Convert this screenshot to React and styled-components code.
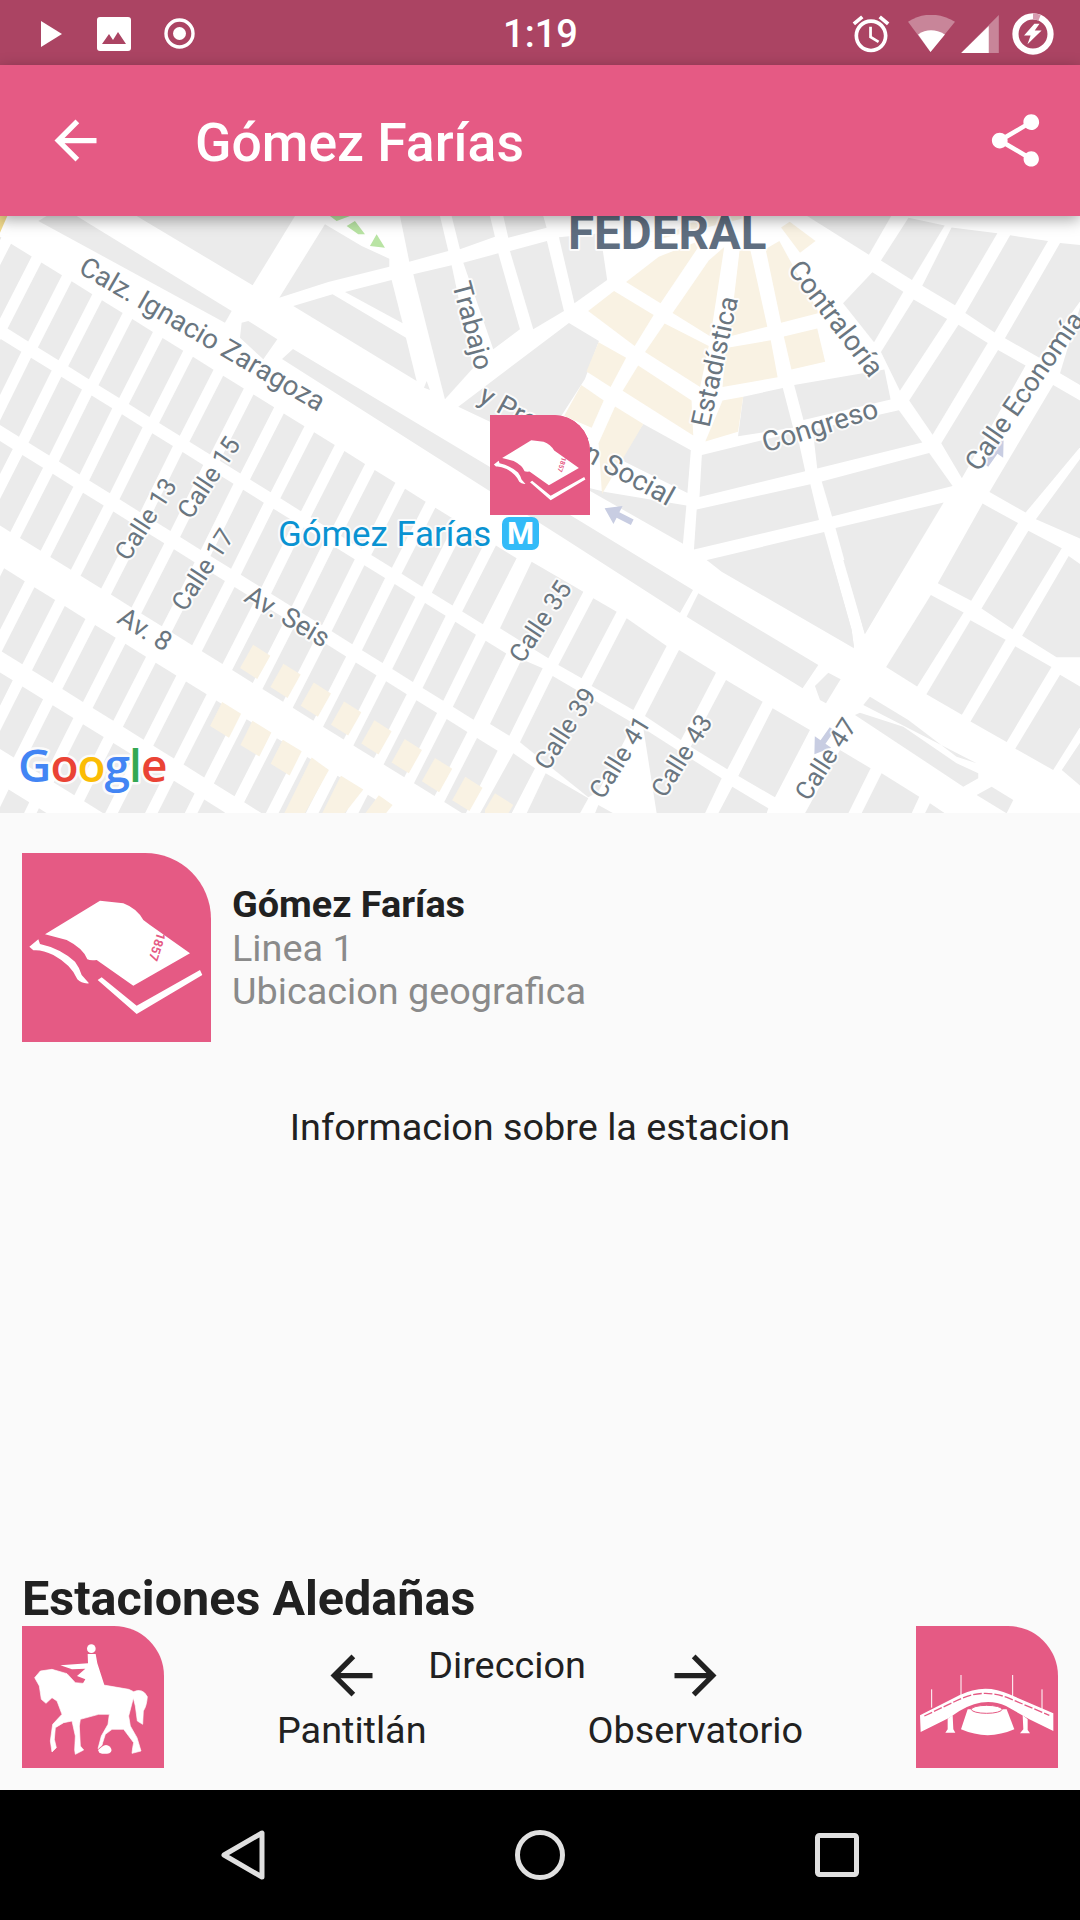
import React from 'react';
import styled, { createGlobalStyle } from 'styled-components';

const Global = createGlobalStyle`
  html, body { margin: 0; padding: 0; background: #fafafa; }
  * { box-sizing: border-box; }
`;
const PINK = '#e55a84';
const Page = styled.div`
  width: 1080px; height: 1920px; display: flex; flex-direction: column;
  font-family: Roboto, "Noto Sans", sans-serif; background: #fafafa; color: #212121; overflow: hidden;
`;
const StatusBar = styled.div`
  height: 65px; flex: none; background: #ab4463; display: grid; grid-template-columns: 1fr auto 1fr; align-items: center; color: #fff;
`;
const StatusLeft = styled.div`display: flex; align-items: center; gap: 33px; padding-left: 41px;`;
const StatusRight = styled.div`display: flex; align-items: center; justify-content: flex-end; padding-right: 26px;`;
const StatusSlot = styled.span`display: block; margin-left: ${p => p.$gap || 0}px;`;
const Clock = styled.div`font-size: 38px; font-weight: 500; line-height: 65px; padding: 2px 0 0 1px;`;
const AppBar = styled.header`
  height: 151px; flex: none; background: ${PINK}; display: flex; align-items: center; padding: 0 33px 0 44px; color: #fff;
  box-shadow: 0 4px 14px rgba(0,0,0,.35); position: relative; z-index: 2;
`;
const Title = styled.h1`flex: 1; margin: 4px 0 0 88px; font-size: 53.5px; font-weight: 500; line-height: 60px;`;
const MapArea = styled.div`height: 597px; flex: none; position: relative; background: #fff; overflow: hidden;`;
const MapSvg = styled.svg`display: block; width: 1080px; height: 597px;`;
const MapLabel = styled.text`
  font-family: Roboto, sans-serif; font-size: ${p => p.$size || 28}px; fill: ${p => p.$color || '#6a7680'};
  font-weight: ${p => p.$weight || 400}; paint-order: stroke; stroke: rgba(255,255,255,.85); stroke-width: 4px; stroke-linejoin: round;
`;
const GoogleMark = styled.text`
  font-family: "Open Sans", sans-serif; font-size: 46px; font-weight: 600; letter-spacing: -1px;
  paint-order: stroke; stroke: rgba(255,255,255,.85); stroke-width: 5px; stroke-linejoin: round;
`;
const Marker = styled.div`
  position: absolute; left: 490px; top: 199px; width: 100px; height: 100px; background: ${PINK}; border-top-right-radius: 36px; overflow: hidden;
`;
const MetroBadge = styled.span`
  position: absolute; left: 502px; top: 301px; width: 37px; height: 33px; border-radius: 7px; background: #33bbf8; color: #fff;
  font-size: 31px; font-weight: 700; line-height: 33px; text-align: center;
`;
const Tile = styled.div`
  flex: none; width: ${p => p.$size}px; height: ${p => p.$size}px; background: ${PINK};
  border-top-right-radius: ${p => Math.round(p.$size * .35)}px; overflow: hidden;
  svg { display: block; width: 100%; height: 100%; }
`;
const Content = styled.main`flex: 1; display: flex; flex-direction: column; padding: 40px 22px 22px; min-height: 0;`;
const InfoRow = styled.section`display: flex; align-items: center; gap: 21px;`;
const InfoText = styled.div`display: flex; flex-direction: column; padding-top: 2px;`;
const InfoName = styled.div`font-size: 37.8px; font-weight: 700; line-height: 43.5px; color: #212121;`;
const InfoSub = styled.div`font-size: 37.8px; line-height: 43.5px; color: #8a8a8a;`;
const Description = styled.p`margin: 64px 0 0; font-size: 37.8px; line-height: 43px; text-align: center;`;
const NearbyTitle = styled.h2`margin: auto 0 0; font-size: 48.5px; font-weight: 700; line-height: 54px; color: #212121;`;
const NearbyRow = styled.div`display: flex; align-items: flex-start;`;
const Directions = styled.div`flex: 1; display: flex; justify-content: center; gap: 1.6px; padding-top: 18px;`;
const DirectionCol = styled.div`display: flex; flex-direction: column; align-items: center;`;
const DirectionLabel = styled.div`font-size: 37.8px; line-height: 43px; margin-top: ${p => p.$top || 0}px; white-space: nowrap;`;
const NavBar = styled.nav`
  height: 130px; flex: none; background: #000; display: flex; align-items: center; justify-content: center; gap: 250px;
`;

const ArrowBack = ({ size = 63, color = '#fff' }) => (
  <svg width={size} height={size} viewBox="0 0 24 24" fill={color} style={{ display: 'block', flex: 'none' }}>
    <path d="M20 11H7.83l5.59-5.59L12 4l-8 8 8 8 1.41-1.41L7.83 13H20v-2z" />
  </svg>
);
const ArrowForward = ({ size = 63, color = '#212121' }) => (
  <svg width={size} height={size} viewBox="0 0 24 24" fill={color} style={{ display: 'block', flex: 'none' }}>
    <path d="M12 4l-1.41 1.41L16.17 11H4v2h12.17l-5.58 5.59L12 20l8-8z" />
  </svg>
);
const ShareIcon = () => (
  <svg width="63" height="63" viewBox="0 0 24 24" fill="#fff" style={{ display: 'block' }}>
    <path d="M18 16.08c-.76 0-1.44.3-1.96.77L8.91 12.7c.05-.23.09-.46.09-.7s-.04-.47-.09-.7l7.05-4.11c.54.5 1.25.81 2.04.81 1.66 0 3-1.34 3-3s-1.34-3-3-3-3 1.34-3 3c0 .24.04.47.09.7L8.04 9.81C7.5 9.31 6.79 9 6 9c-1.66 0-3 1.34-3 3s1.34 3 3 3c.79 0 1.5-.31 2.04-.81l7.12 4.16c-.05.21-.08.43-.08.65 0 1.61 1.31 2.92 2.92 2.92 1.61 0 2.92-1.31 2.92-2.92s-1.31-2.92-2.92-2.92z" />
  </svg>
);
const PlayIcon = () => <svg width="23" height="26" viewBox="0 0 23 26"><path d="M0 0l21 13L0 26z" fill="#fff" /></svg>;
const ImageIcon = () => (
  <svg width="34" height="34" viewBox="0 0 34 34">
    <rect width="34" height="34" rx="3" fill="#fff" />
    <path d="M5 27l7-10 4 6 5-8 8 12z" fill="#ab4463" />
  </svg>
);
const RecordIcon = () => (
  <svg width="31" height="31" viewBox="0 0 31 31">
    <circle cx="15.5" cy="15.5" r="13.5" fill="none" stroke="#fff" strokeWidth="3.4" />
    <circle cx="15.5" cy="15.5" r="6.5" fill="#fff" />
  </svg>
);
const AlarmIcon = () => (
  <svg width="44" height="44" viewBox="0 0 24 24" fill="#fff" style={{ display: 'block' }}>
    <path d="M22 5.72l-4.6-3.86-1.29 1.53 4.6 3.86L22 5.72zM7.88 3.39L6.6 1.86 2 5.71l1.29 1.53 4.59-3.85zM12.5 8H11v6l4.75 2.85.75-1.23-4-2.37V8zM12 4c-4.97 0-9 4.03-9 9s4.02 9 9 9c4.97 0 9-4.03 9-9s-4.03-9-9-9zm0 16c-3.87 0-7-3.13-7-7s3.13-7 7-7 7 3.13 7 7-3.13 7-7 7z" />
  </svg>
);
const WifiIcon = () => (
  <svg width="47" height="37" viewBox="205 42 140 110" style={{ display: 'block' }}>
    <path d="M205 62Q272 20 345 62L272 152z" fill="#fff" fillOpacity=".35" />
    <path d="M235 100Q272 75 315 100L272 152z" fill="#fff" />
  </svg>
);
const SignalIcon = () => (
  <svg width="38" height="38" viewBox="360 42 112 113" style={{ display: 'block' }}>
    <path d="M360 155L472 42V155z" fill="#fff" fillOpacity=".35" />
    <path d="M360 155L442 75V155z" fill="#fff" />
  </svg>
);
const BatteryIcon = () => (
  <svg width="42" height="42" viewBox="520 37 122 122" style={{ display: 'block' }}>
    <circle cx="581" cy="98" r="51" fill="none" stroke="#fff" strokeWidth="18" />
    <path d="M581 47A51 51 0 0 1 600 51" fill="none" stroke="#d79bb0" strokeWidth="18" />
    <path d="M585 68L555 102H574L565 128L606 88H586L600 68z" fill="#fff" />
  </svg>
);

const BookArt = () => (
  <svg viewBox="66 39 567 567">
    <path fill="#fff" d="M135 283L300 182L370 190Q410 205 430 240L450 255L570 340L400 437L290 360Q270 362 262 358Q250 325 200 300Z" />
    <path fill="#fff" d="M88 320L115 298L120 312Q180 325 225 365Q240 385 245 405L267 430Q245 432 232 418Q215 375 160 345Q125 328 100 331Z" />
    <path fill="#fff" d="M293 420L305 412L410 497L600 390L607 405L410 522Z" />
    <text x="472" y="320" fill={PINK} fontFamily="Roboto, sans-serif" fontSize="38" fontWeight="700" textAnchor="middle" dominantBaseline="central" transform="rotate(108 472 320)">1857</text>
  </svg>
);
const HorseArt = () => (
  <svg viewBox="0 0 426 426">
    <circle cx="208" cy="68" r="13" fill="#fff" />
    <path fill="#fff" d="M197 84H221L226 112L248 180H178L190 160L165 150L190 128L150 130L115 118L198 112Z" />
    <path fill="#fff" stroke="#fff" strokeWidth="2" strokeLinejoin="round" d="M38 155L55 135L90 130L135 143L160 170L250 178L320 190L335 197Q362 185 376 212Q374 240 364 255L362 295L346 285L340 240L334 216L320 270L325 300L345 335L357 375L330 382L332 365L335 350L305 310L270 310L250 325L242 350L240 358L228 368L238 330L258 295L262 265L230 265L175 280L172 300L175 360L185 372L160 385L158 372L160 330L150 285L125 290L100 305L97 340L103 365L90 378L85 345L92 295L120 265L105 225L90 215L72 232L58 220L52 180Z" />
    <path fill="#fff" d="M228 372L240 362Q252 352 264 362Q274 374 262 382Q245 386 232 380Z" />
  </svg>
);
const BridgeArt = () => (
  <svg viewBox="0 0 426 426">
    <path d="M47 190V245M135 147V210M290 147V210M378 190V250" stroke="#fff" strokeWidth="3" fill="none" />
    <path fill="#fff" d="M12 268L130 208Q205 170 280 205L412 262V315L340 280L270 240Q205 210 130 255L100 275L14 318Z" />
    <path fill="#fff" d="M95 278L110 268L112 310L118 320H88L95 310ZM320 268L335 280V312L342 322H312L322 310Z" />
    <path fill="#fff" d="M155 250H272L295 310Q215 345 135 310Z" />
    <ellipse cx="212" cy="250" rx="46" ry="12" fill="#fff" stroke={PINK} strokeWidth="3" />
    <path d="M25 270L130 220Q205 186 280 217L400 268" fill="none" stroke={PINK} strokeWidth="4" strokeDasharray="26 6" />
  </svg>
);

const pts = a => a.map(v => v.join(',')).join(' ');
const add = (a, b, k = 1) => [a[0] + b[0] * k, a[1] + b[1] * k];

function makeRow(start, from, to, L, w = [60, 33], u = [88, 48.5]) {
  const out = [];
  for (let k = from; k <= to; k++) {
    const p = add(start, u, k);
    out.push([p, add(p, w), add(add(p, w), L), add(p, L)]);
  }
  return out;
}
/* left half, coordinates read from a 2.904 x 2.571 view */
const leftRows = [
  ...makeRow([120, 135], -2, 15, [-98, 170]),
  ...makeRow([90, 380], -1, 15, [-95, 170]),
  ...makeRow([65, 630], -1, 15, [-95, 165]),
  ...makeRow([100, 970], -2, 12, [-95, 165]),
  ...makeRow([65, 1225], -2, 8, [-85, 150]),
  ...makeRow([25, 1490], -1, 4, [-60, 110]),
];
const leftBeige = [
  ...makeRow([735, 1118], 0, 8, [-38, 60], [50, 28]),
  ...makeRow([645, 1265], 0, 2, [-35, 62], [55, 30]),
  [[825, 1552], [905, 1408], [955, 1440], [885, 1552]],
  [[935, 1552], [990, 1455], [1055, 1490], [1000, 1552]],
  [[1060, 1552], [1100, 1505], [1140, 1530], [1120, 1552]],
];
/* top-left of the map, 3x view from (0,216) */
const topLeftGrey = [
  [[115, 15], [140, 0], [230, 0], [695, 285], [675, 320]],
  [[410, 0], [885, 0], [758, 208]],
  [[725, 320], [745, 315], [832, 370], [790, 430], [720, 365]],
  [[838, 245], [975, 25], [1085, 90], [1168, 128], [1168, 152], [985, 198]],
  [[880, 270], [998, 235], [1218, 365], [1250, 495]],
  [[1035, 228], [1175, 192], [1208, 322]],
  [[1200, 0], [1320, 0], [1345, 105], [1228, 137]],
  [[1355, 0], [1470, 0], [1485, 62], [1380, 100]],
  [[1240, 175], [1355, 148], [1420, 455], [1335, 550]],
  [[1390, 140], [1495, 112], [1560, 340], [1480, 400]],
  [[1510, 0], [1630, 0], [1640, 35], [1525, 65]],
  [[1530, 105], [1641, 75], [1692, 285], [1600, 340]],
  [[1375, 572], [1707, 321], [1797, 375], [1755, 489], [1620, 700], [1560, 660]],
  [[1280, 495], [1290, 522], [1272, 515]],
];
/* right half, coordinates read from a 2.904 x 2.571 view */
const rightGrey = [
  [[55, 70], [175, 60], [195, 180], [100, 240]],
  [[590, 480], [705, 458], [735, 560], [575, 582]],
  [[738, 450], [1000, 410], [1018, 487], [765, 540]],
  [[470, 630], [745, 570], [770, 672], [463, 738]],
  [[792, 565], [1042, 515], [1110, 598], [805, 665]],
  [[818, 698], [1130, 625], [1198, 710], [848, 788]],
  [[455, 770], [785, 705], [810, 797], [447, 873]],
  [[485, 900], [825, 828], [905, 1080], [912, 1125]],
  [[858, 818], [1172, 752], [943, 1090]],
  [[300, 550], [438, 618], [428, 728], [230, 640]],
  [[190, 725], [425, 760], [415, 858], [120, 710]],
  [[775, 15], [1020, 15], [955, 115]],
  [[990, 130], [1070, 20], [1175, 40], [1080, 180]],
  [[1110, 195], [1195, 45], [1328, 60], [1205, 245]],
  [[1235, 265], [1365, 65], [1475, 80], [1320, 315]],
  [[1350, 330], [1510, 85], [1568, 90], [1568, 235], [1450, 380]],
  [[880, 240], [965, 160], [1055, 210], [970, 340]],
  [[990, 365], [1085, 230], [1182, 280], [1045, 465]],
  [[1072, 490], [1215, 295], [1300, 342], [1140, 578]],
  [[1165, 600], [1330, 360], [1410, 400], [1225, 690]],
  [[1305, 725], [1490, 450], [1568, 490], [1568, 610], [1410, 778]],
  [[1440, 795], [1568, 640], [1568, 845]],
  [[1510, 420], [1568, 250], [1568, 450]],
  [[1155, 960], [1285, 755], [1388, 805], [1252, 1005]],
  [[1282, 1025], [1418, 825], [1515, 870], [1372, 1078]],
  [[1400, 1095], [1535, 890], [1568, 910], [1568, 1150], [1500, 1150]],
  [[1005, 1175], [1135, 990], [1230, 1035], [1095, 1225]],
  [[1122, 1245], [1250, 1055], [1352, 1105], [1225, 1298]],
  [[1250, 1315], [1380, 1122], [1485, 1175], [1355, 1368]],
  [[1380, 1385], [1510, 1195], [1568, 1225], [1568, 1330], [1490, 1440]],
  [[1515, 1440], [1568, 1370], [1568, 1480]],
];
const rightBeige = [
  [[250, 185], [345, 120], [475, 75], [350, 240]],
  [[385, 265], [490, 130], [535, 95], [495, 325]],
  [[580, 100], [610, 100], [660, 300], [550, 325]],
  [[655, 100], [695, 80], [810, 265], [700, 290]],
  [[700, 45], [725, 30], [800, 80], [755, 110]],
  [[210, 105], [330, 80], [480, 15], [620, 15]],
  [[140, 260], [215, 208], [330, 270], [275, 350]],
  [[305, 365], [362, 292], [490, 350], [465, 455]],
  [[540, 355], [670, 335], [690, 430], [530, 455]],
  [[708, 325], [805, 305], [828, 390], [730, 410]],
  [[135, 415], [170, 340], [250, 380], [205, 455]],
  [[240, 465], [285, 400], [440, 490], [445, 580]],
  [[70, 530], [120, 450], [185, 490], [150, 560]],
  [[170, 600], [218, 505], [300, 550], [180, 730]],
  [[480, 595], [530, 490], [590, 480], [575, 570]],
];
/* bottom middle of the map, 3x view from (480,560) */
const bottomGrey = [
  [[60, 205], [155, 5], [310, 95], [205, 295]],
  [[235, 315], [340, 115], [410, 155], [305, 355]],
  [[335, 378], [440, 175], [560, 258], [460, 450]],
  [[495, 468], [597, 270], [708, 338], [603, 540]],
  [[632, 560], [738, 360], [848, 425], [742, 628]],
  [[775, 648], [878, 445], [990, 510], [885, 712]],
  [[30, 492], [125, 298], [188, 325], [88, 527]],
  [[120, 547], [218, 348], [460, 490], [355, 695], [325, 712]],
  [[490, 505], [725, 655], [675, 760], [530, 760]],
  [[715, 760], [757, 680], [865, 745], [860, 760]],
  [[0, 760], [100, 580], [165, 625], [95, 760]],
  [[140, 760], [197, 640], [325, 715], [300, 760]],
  [[345, 760], [355, 735], [400, 760]],
  [[975, 760], [1080, 570], [1172, 625], [1105, 760]],
  [[1145, 760], [1205, 640], [1318, 710], [1295, 760]],
  [[1335, 760], [1350, 730], [1395, 760]],
  [[620, 170], [655, 100], [1015, 315], [968, 385]],
  [[1005, 378], [1045, 338], [1082, 358], [1038, 430], [1020, 420]],
  [[680, 0], [1055, 0], [1115, 210], [1122, 265], [725, 35]],
  [[1090, 0], [1285, 0], [1155, 222]],
  [[1125, 465], [1140, 458], [1270, 500], [1430, 610], [1495, 640], [1495, 655], [1450, 680]],
  [[1150, 435], [1170, 410], [1285, 480], [1430, 590], [1490, 610]],
  [[1490, 705], [1535, 680], [1600, 720], [1580, 760]],
];

const labels = [
  ['Calz. Ignacio Zaragoza', 80, 263, 325, 405, 27.5],
  ['Calle 13', 119, 560, 172, 478, 25.5],
  ['Calle 15', 181, 519, 236, 436, 25.5],
  ['Calle 17', 176, 610, 229, 529, 25.5],
  ['Av. 8', 120, 614, 170, 645, 27],
  ['Av. Seis', 248, 593, 327, 640, 27],
  ['Trabajo', 461, 283, 484, 368, 27],
  ['y Previsión Social', 482, 393, 672, 498, 28],
  ['Estadística', 702, 420, 728, 303, 27],
  ['Contraloría', 793, 262, 879, 375, 28],
  ['Congreso', 764, 443, 876, 408, 28],
  ['Calle Economía', 969, 471, 1080, 311, 27],
  ['Calle 35', 514, 661, 566, 582, 25.5],
  ['Calle 39', 539, 769, 591, 688, 25.5],
  ['Calle 41', 594, 798, 645, 716, 25.5],
  ['Calle 43', 655, 798, 708, 713, 25.5],
  ['Calle 47', 798, 802, 853, 716, 25.5],
];

const TrafficArrow = ({ x, y, r }) => (
  <path transform={`translate(${x} ${y}) rotate(${r})`} fill="#c8cde2" d="M-16-3H0V-10L15 0 0 10V3H-16z" />
);

const MapView = () => (
  <MapArea>
    <MapSvg viewBox="0 216 1080 597">
      <g transform="translate(0 210) scale(.3444 .3889)" fill="#ebebeb">
        {leftRows.map((p, i) => <polygon key={i} points={pts(p)} />)}
        {leftBeige.map((p, i) => <polygon key={i} points={pts(p)} fill="#f9f2e3" />)}
      </g>
      <g transform="translate(0 216) scale(.3333)" fill="#ebebeb">
        {topLeftGrey.map((p, i) => <polygon key={i} points={pts(p)} />)}
        <path d="M0 0H22L0 50z" fill="#f0d98c" />
        <path d="M1040 30L1065 15L1095 55L1075 55zM1110 90L1130 55L1155 95zM990 0H1050L1010 15z" fill="#b9e4a4" />
      </g>
      <polygon points="282,359 293,349 580,521 693,590 680,613 568,541" fill="#ebebeb" />
      <g transform="translate(540 210) scale(.3444 .3889)" fill="#ebebeb">
        {rightGrey.map((p, i) => <polygon key={i} points={pts(p)} />)}
        {rightBeige.map((p, i) => <polygon key={i} points={pts(p)} fill="#f9f2e3" />)}
      </g>
      <g transform="translate(480 560) scale(.3333)" fill="#ebebeb">
        {bottomGrey.map((p, i) => <polygon key={i} points={pts(p)} />)}
        <path d="M15 750L45 700L100 735L85 760H15z" fill="#f9f2e3" />
      </g>
      <TrafficArrow x={618} y={515} r={207} />
      <TrafficArrow x={995} y={452} r={-55} />
      <TrafficArrow x={823} y={742} r={125} />
      {labels.map(([t, x1, y1, x2, y2, size]) => {
        const mx = (x1 + x2) / 2, my = (y1 + y2) / 2;
        const a = Math.atan2(y2 - y1, x2 - x1) * 180 / Math.PI;
        return <MapLabel key={t} $size={size} x={mx} y={my} textAnchor="middle" dominantBaseline="central" transform={`rotate(${a} ${mx} ${my})`}>{t}</MapLabel>;
      })}
      <MapLabel x={568} y={249} $size={47.5} $weight={700} $color="#5f6e80">FEDERAL</MapLabel>
      <MapLabel x={278} y={546} $size={34.8} $color="#0a93d2">Gómez Farías</MapLabel>
      <GoogleMark x={18} y={782}>
        <tspan fill="#4285f4">G</tspan><tspan fill="#ea4335">o</tspan><tspan fill="#fbbc05">o</tspan><tspan fill="#4285f4">g</tspan><tspan fill="#34a853">l</tspan><tspan fill="#ea4335">e</tspan>
      </GoogleMark>
    </MapSvg>
    <MetroBadge>M</MetroBadge>
    <Marker><Tile $size={100}><BookArt /></Tile></Marker>
  </MapArea>
);

export default function App() {
  return (
    <Page>
      <Global />
      <StatusBar>
        <StatusLeft><PlayIcon /><ImageIcon /><RecordIcon /></StatusLeft>
        <Clock>1:19</Clock>
        <StatusRight>
          <StatusSlot><AlarmIcon /></StatusSlot>
          <StatusSlot $gap={15}><WifiIcon /></StatusSlot>
          <StatusSlot $gap={6}><SignalIcon /></StatusSlot>
          <StatusSlot $gap={13}><BatteryIcon /></StatusSlot>
        </StatusRight>
      </StatusBar>
      <AppBar>
        <ArrowBack />
        <Title>Gómez Farías</Title>
        <ShareIcon />
      </AppBar>
      <MapView />
      <Content>
        <InfoRow>
          <Tile $size={189}><BookArt /></Tile>
          <InfoText>
            <InfoName>Gómez Farías</InfoName>
            <InfoSub>Linea 1</InfoSub>
            <InfoSub>Ubicacion geografica</InfoSub>
          </InfoText>
        </InfoRow>
        <Description>Informacion sobre la estacion</Description>
        <NearbyTitle>Estaciones Aledañas</NearbyTitle>
        <NearbyRow>
          <Tile $size={142}><HorseArt /></Tile>
          <Directions>
            <DirectionCol><ArrowBack color="#212121" /><DirectionLabel $top={1.5}>Pantitlán</DirectionLabel></DirectionCol>
            <DirectionLabel>Direccion</DirectionLabel>
            <DirectionCol><ArrowForward /><DirectionLabel $top={1.5}>Observatorio</DirectionLabel></DirectionCol>
          </Directions>
          <Tile $size={142}><BridgeArt /></Tile>
        </NearbyRow>
      </Content>
      <NavBar>
        <svg width="44" height="50" viewBox="0 0 44 50"><path d="M41 3V47L3 25Z" fill="none" stroke="#e0e0e0" strokeWidth="5" strokeLinejoin="round" /></svg>
        <svg width="50" height="50" viewBox="0 0 50 50"><circle cx="25" cy="25" r="22.5" fill="none" stroke="#e0e0e0" strokeWidth="5" /></svg>
        <svg width="44" height="44" viewBox="0 0 44 44"><rect x="2.5" y="2.5" width="39" height="39" rx="2" fill="none" stroke="#e0e0e0" strokeWidth="5" /></svg>
      </NavBar>
    </Page>
  );
}
